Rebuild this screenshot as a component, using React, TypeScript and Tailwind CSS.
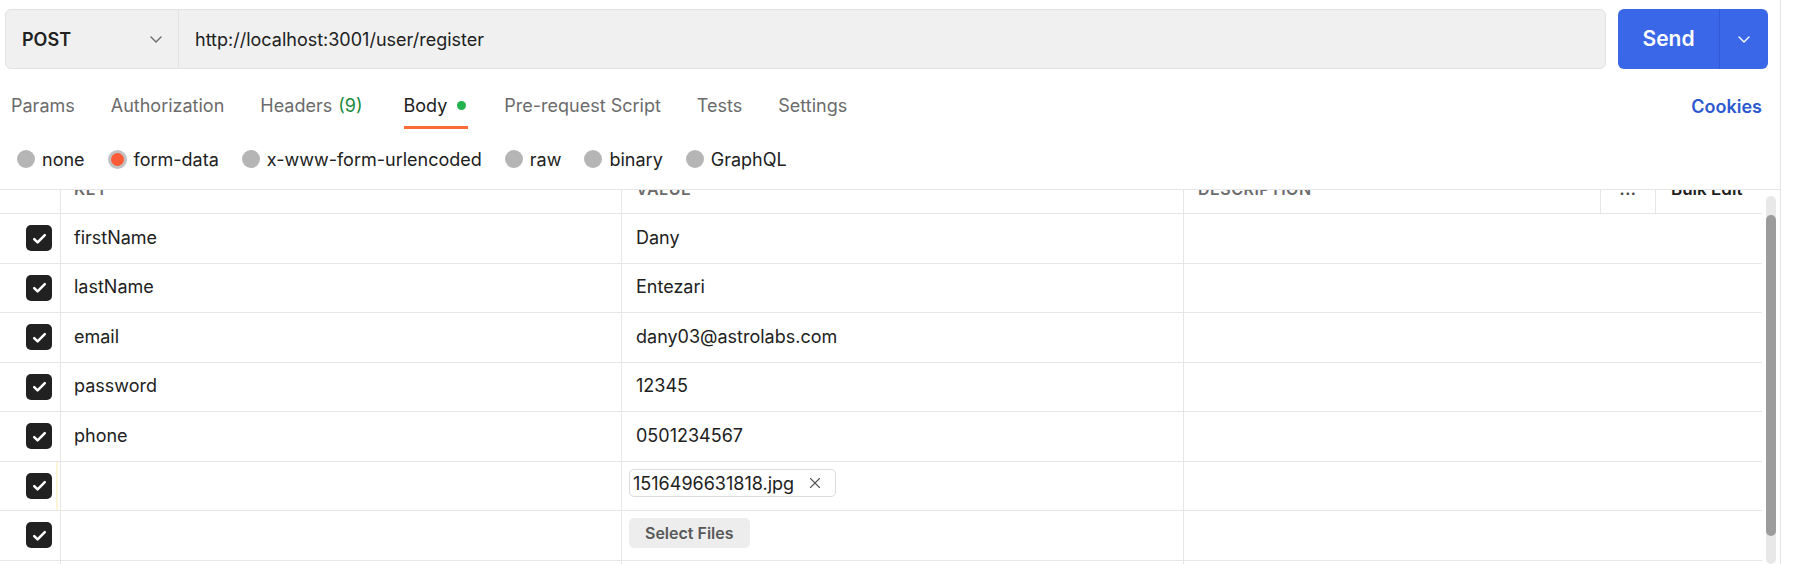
import { X } from 'lucide-react';

// simple thin chevron used by method select and send split button
function Chevron({ className }: { className?: string }) {
  return (
    <svg width="16" height="16" viewBox="0 0 16 16" fill="none" className={className}>
      <path d="M3 6l5 5 5-5" stroke="currentColor" strokeWidth="1.4" strokeLinecap="round" strokeLinejoin="round" />
    </svg>
  );
}

function CheckBox() {
  return (
    <div className="w-[26px] h-[26px] rounded-[5px] bg-[#212121] flex items-center justify-center">
      <svg width="19" height="19" viewBox="0 0 18 18" fill="none">
        <path d="M4 9.5l3.2 3.2L14 5.8" stroke="white" strokeWidth="2.4" strokeLinecap="round" strokeLinejoin="round" />
      </svg>
    </div>
  );
}

const tabs = ['Params', 'Authorization', 'Headers', 'Body', 'Pre-request Script', 'Tests', 'Settings'];
const bodyTypes = ['none', 'form-data', 'x-www-form-urlencoded', 'raw', 'binary', 'GraphQL'];

const rows = [
  { key: 'firstName', value: 'Dany' },
  { key: 'lastName', value: 'Entezari' },
  { key: 'email', value: 'dany03@astrolabs.com' },
  { key: 'password', value: '12345' },
  { key: 'phone', value: '0501234567' },
  { key: '', value: 'file' },
  { key: '', value: 'select' },
];

export default function App() {
  return (
    <div className="w-[1806px] h-[564px] bg-white overflow-hidden font-[Inter,'Noto_Sans',sans-serif] text-[#212121]">
      <div className="w-[1781px] h-full border-r border-[#e4e4e4] flex flex-col">
        {/* request bar */}
        <div className="flex pt-[9px] pl-[5px] pr-[12px] gap-[12px] h-[69px] shrink-0">
          <div className="flex-1 flex h-[60px] bg-[#f0f0f0] border border-[#e2e2e2] rounded-[6px]">
            <div className="w-[173px] flex items-center justify-between pl-[16px] pr-[14px] border-r border-[#e2e2e2]">
              <span className="text-[18px] font-semibold">POST</span>
              <Chevron className="text-[#6b6b6b]" />
            </div>
            <div className="flex items-center pl-[16px] text-[18px]">http://localhost:3001/user/register</div>
          </div>
          <div className="w-[150px] h-[60px] flex rounded-[6px] bg-[#3a67e8] text-white">
            <div className="w-[102px] flex items-center justify-center text-[21px] font-semibold border-r border-[#3159d6]">
              Send
            </div>
            <div className="flex-1 flex items-center justify-center">
              <Chevron />
            </div>
          </div>
        </div>

        {/* tabs */}
        <div className="flex h-[60px] shrink-0 pl-[11px] text-[18px]">
          <div className="flex gap-[36px]">
            {tabs.map((t) => (
              <div
                key={t}
                className={
                  t === 'Body'
                    ? 'h-full ml-[5px] pt-[15px] flex items-center gap-[10px] pr-[2px] border-b-[3px] border-[#ff6c37] text-[#212121]'
                    : 'h-full pt-[15px] flex items-center border-b-[3px] border-transparent text-[#6b6b6b]'
                }
              >
                {t}
                {t === 'Headers' && <span className="ml-[6px] text-[#1b8a3e]">(9)</span>}
                {t === 'Body' && <span className="w-[9px] h-[9px] rounded-full bg-[#22b34f]" />}
              </div>
            ))}
          </div>
          <div className="ml-auto pr-[18px] pt-[15px] flex items-center font-semibold text-[#2d59cf]">Cookies</div>
        </div>

        {/* body types */}
        <div className="flex items-center h-[60px] shrink-0 pl-[17px] gap-[23px] text-[18px]">
          {bodyTypes.map((b) => (
            <div key={b} className="flex items-center gap-[7px]">
              {b === 'form-data' ? (
                <span className="w-[19px] h-[19px] rounded-full border-[3px] border-[#c2c2c2] bg-[#ff5b36]" />
              ) : (
                <span className="w-[18px] h-[18px] rounded-full bg-[#b5b5b5]" />
              )}
              <span>{b}</span>
            </div>
          ))}
        </div>

        {/* table */}
        <div className="flex-1 flex border-t border-[#e6e6e6] min-h-0">
          <div className="flex-1 flex flex-col">
            <div className="h-[24px] shrink-0 flex border-b border-[#e6e6e6] overflow-hidden text-[16px] leading-[20px] font-semibold tracking-[0.5px] text-[#6b6b6b]">
              <div className="w-[60px]" />
              <div className="w-[561px] border-l border-[#e6e6e6] pl-[13px]">
                <div className="-mt-[11px]">KEY</div>
              </div>
              <div className="w-[562px] border-l border-[#e6e6e6] pl-[14px]">
                <div className="-mt-[11px]">VALUE</div>
              </div>
              <div className="w-[417px] border-l border-[#e6e6e6] pl-[14px]">
                <div className="-mt-[11px]">DESCRIPTION</div>
              </div>
              <div className="w-[55px] border-l border-[#e6e6e6] flex justify-center">
                <div className="-mt-[11px] text-[#444]">...</div>
              </div>
              <div className="flex-1 border-l border-[#e6e6e6] pl-[15px]">
                <div className="-mt-[11px] text-[17px] text-[#212121] tracking-normal">Bulk Edit</div>
              </div>
            </div>

            {rows.map((r, i) => (
              <div key={i} className="h-[49.5px] shrink-0 flex border-b border-[#e6e6e6] text-[18px]">
                <div className="w-[60px] flex items-center pl-[26px]">
                  <CheckBox />
                  {r.value === 'file' && <div className="self-stretch w-[2px] ml-auto mr-[2px] bg-[#fcf4d4]" />}
                </div>
                <div className="w-[561px] border-l border-[#e6e6e6] pl-[13px] pb-[2px] flex items-center">{r.key}</div>
                <div className="w-[562px] border-l border-[#e6e6e6] flex items-center">
                  {r.value === 'file' ? (
                    <div className="ml-[7px] -mt-[5px] h-[28px] flex items-center gap-[12px] pl-[3px] pr-[11px] border border-[#dcdcdc] rounded-[5px]">
                      <span>1516496631818.jpg</span>
                      <X size={18} strokeWidth={1.5} className="text-[#555]" />
                    </div>
                  ) : r.value === 'select' ? (
                    <div className="ml-[7px] -mt-[5px] h-[30px] flex items-center px-[16px] rounded-[5px] bg-[#ededed] text-[16px] font-semibold text-[#595959]">
                      Select Files
                    </div>
                  ) : (
                    <span className="pl-[14px] pb-[2px]">{r.value}</span>
                  )}
                </div>
                <div className="flex-1 border-l border-[#e6e6e6]" />
              </div>
            ))}
            <div className="h-[49.5px] shrink-0 flex">
              <div className="w-[60px]" />
              <div className="w-[561px] border-l border-[#e6e6e6]" />
              <div className="w-[562px] border-l border-[#e6e6e6]" />
              <div className="flex-1 border-l border-[#e6e6e6]" />
            </div>
          </div>

          {/* scrollbar */}
          <div className="w-[10px] ml-[4px] mr-[4px] pt-[6px] flex flex-col">
            <div className="flex-1 rounded-full bg-[#e8e8e8]">
              <div className="mt-[19px] h-[321px] rounded-full bg-[#9c9c9c]" />
            </div>
          </div>
        </div>
      </div>
    </div>
  );
}
